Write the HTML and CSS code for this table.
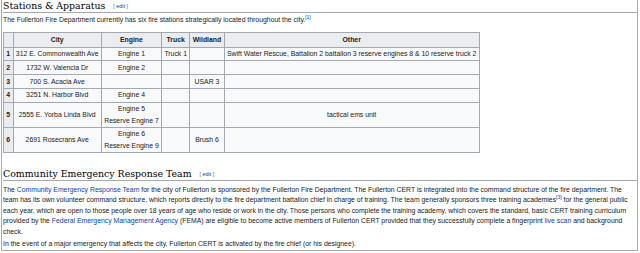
FILE: index.html
```
<!DOCTYPE html>
<html lang="en">
<head>
  <meta charset="UTF-8">
  <title>Fullerton Fire Department</title>
  <link rel="stylesheet" href="styles.css">
</head>
<body>

<div class="page">
  <h2 class="heading">
    <span class="headline">Stations &amp; Apparatus</span>
    <span class="editsection">[ <a href="#">edit</a> ]</span>
  </h2>
  <p>The Fullerton Fire Department currently has six fire stations strategically located throughout the city.<sup><a href="#">[1]</a></sup></p>

  <table class="wikitable">
    <tr>
      <th class="idx"></th>
      <th>City</th>
      <th>Engine</th>
      <th>Truck</th>
      <th>Wildland</th>
      <th>Other</th>
    </tr>
    <tr>
      <th class="idx">1</th>
      <td>312 E. Commonwealth Ave</td>
      <td>Engine 1</td>
      <td>Truck 1</td>
      <td></td>
      <td>Swift Water Rescue, Battalion 2 battalion 3 reserve engines 8 &amp; 10 reserve truck 2</td>
    </tr>
    <tr>
      <th class="idx">2</th>
      <td>1732 W. Valencia Dr</td>
      <td>Engine 2</td>
      <td></td>
      <td></td>
      <td></td>
    </tr>
    <tr>
      <th class="idx">3</th>
      <td>700 S. Acacia Ave</td>
      <td></td>
      <td></td>
      <td>USAR 3</td>
      <td></td>
    </tr>
    <tr>
      <th class="idx">4</th>
      <td>3251 N. Harbor Blvd</td>
      <td>Engine 4</td>
      <td></td>
      <td></td>
      <td></td>
    </tr>
    <tr>
      <th class="idx">5</th>
      <td>2555 E. Yorba Linda Blvd</td>
      <td>Engine 5<br>Reserve Engine 7</td>
      <td></td>
      <td></td>
      <td>tactical ems unit</td>
    </tr>
    <tr>
      <th class="idx">6</th>
      <td>2691 Rosecrans Ave</td>
      <td>Engine 6<br>Reserve Engine 9</td>
      <td></td>
      <td>Brush 6</td>
      <td></td>
    </tr>
  </table>

  <h2 class="heading second">
    <span class="headline">Community Emergency Response Team</span>
    <span class="editsection">[ <a href="#">edit</a> ]</span>
  </h2>
  <p class="after-heading">The <a href="#">Community Emergency Response Team</a> for the city of Fullerton is sponsored by the Fullerton Fire Department. The Fullerton CERT is integrated into the command structure of the fire department. The team has its own volunteer command structure, which reports directly to the fire department battalion chief in charge of training. The team generally sponsors three training academies<sup><a href="#">[3]</a></sup> for the general public each year, which are open to those people over 18 years of age who reside or work in the city. Those persons who complete the training academy, which covers the standard, basic CERT training curriculum provided by the <a href="#">Federal Emergency Management Agency</a> (FEMA) are eligible to become active members of Fullerton CERT provided that they successfully complete a fingerprint <a href="#">live scan</a> and background check.</p>
  <p class="next">In the event of a major emergency that affects the city, Fullerton CERT is activated by the fire chief (or his designee).</p>
</div>

</body>
</html>
```

FILE: styles.css
```
body {
  margin: 0;
  background: #fff;
  color: #202122;
  font-family: "Liberation Sans", Arial, sans-serif;
  font-size: 6.87px;
}

a {
  color: #0645ad;
  text-decoration: none;
}

.page {
  box-sizing: border-box;
  width: 637px;
  height: 251px;
  margin-left: 1px;
  padding-left: 1px;
  border: 1px solid #a7abb0;
  border-top: none;
  overflow: hidden;
}

.heading {
  margin: 0;
  font-weight: normal;
  line-height: 12px;
  border-bottom: 1px solid #a2a9b1;
  color: #000;
}

.heading.second {
  margin-top: 15px;
}

.headline {
  font-family: "DejaVu Serif", "Liberation Serif", serif;
  font-size: 9.4px;
}

.editsection {
  margin-left: 5px;
  font-size: 5.4px;
  color: #54595d;
  vertical-align: 1px;
}

p {
  margin: 2px 0 0;
  padding-right: 4px;
  line-height: 10.5px;
}

p.after-heading {
  margin-top: 3.5px;
}

p.next {
  margin-top: 1.5px;
}

sup {
  font-size: 5px;
  line-height: 1;
  vertical-align: 3px;
}

.wikitable {
  margin-top: 6.5px;
  border-collapse: collapse;
  background: #f8f9fa;
  border: 1px solid #a2a9b1;
  color: #202122;
}

.wikitable th,
.wikitable td {
  border: 1px solid #a2a9b1;
  padding: 0.5px 2.35px;
  line-height: 11.7px;
  text-align: center;
  white-space: nowrap;
}

.wikitable th {
  background: #eaecf0;
  padding: 1px 2.35px;
}

.wikitable th.idx {
  padding: 0.5px 2.35px;
}
```
